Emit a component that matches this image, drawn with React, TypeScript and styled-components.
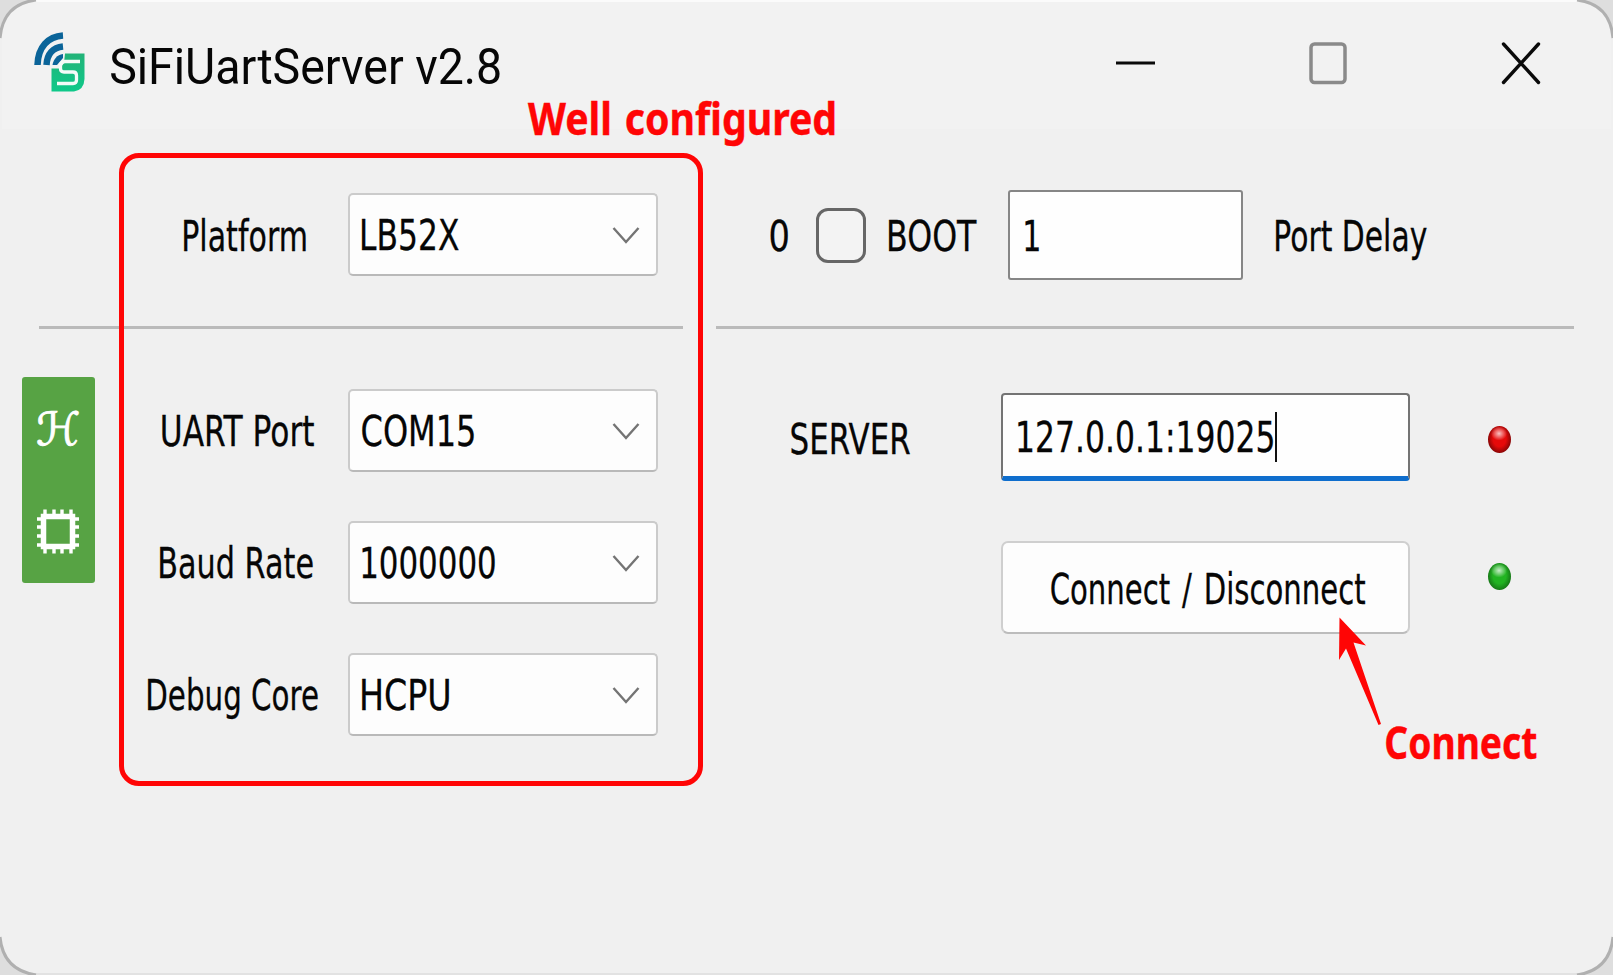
import React, { useMemo } from "react";
import styled, { createGlobalStyle } from "styled-components";

const UI_FONT = '"DejaVu Sans", sans-serif';
const TITLE_FONT = 'Roboto, sans-serif';
const NOTE_FONT = '"Noto Sans", sans-serif';

const GlobalStyle = createGlobalStyle`
  * { box-sizing: border-box; }
  body { margin: 0; background: #f0f0f0; overflow: hidden; }
`;

/* Text squeezed horizontally so that its visible ink fills a given width. */
const FitBox = styled.span<{ $w: number; $size: number; $down: number }>`
  display: block;
  flex: none;
  width: ${(p) => p.$w}px;
  height: ${(p) => p.$size}px;
  margin-top: ${(p) => p.$down * 2}px;
`;
const FitInk = styled.span<{ $size: number; $family: string; $weight: number; $stroke: number; $gap: number }>`
  display: block;
  width: max-content;
  white-space: pre;
  font: ${(p) => p.$weight} ${(p) => p.$size}px/1 ${(p) => p.$family};
  word-spacing: ${(p) => p.$gap}px;
  -webkit-text-stroke: ${(p) => p.$stroke}px currentColor;
  transform-origin: 0 0;
`;
type FitProps = {
  children: string;
  width: number;
  size?: number;
  family?: string;
  weight?: number;
  stroke?: number;
  down?: number;
  gap?: number;
};
function FitText({
  children,
  width,
  size = 43,
  family = UI_FONT,
  weight = 400,
  stroke = 0.3,
  down = 1.3,
  gap = 0,
}: FitProps) {
  const transform = useMemo(() => {
    const ctx = document.createElement("canvas").getContext("2d")!;
    ctx.font = `${weight} ${size}px ${family}`;
    const m = ctx.measureText(children);
    const spaces = children.split(" ").length - 1;
    const ink = m.actualBoundingBoxLeft + m.actualBoundingBoxRight + spaces * gap;
    return `scaleX(${width / ink}) translateX(${m.actualBoundingBoxLeft}px)`;
  }, [children, width, size, family, weight, gap]);
  return (
    <FitBox $w={width} $size={size} $down={down}>
      <FitInk $size={size} $family={family} $weight={weight} $stroke={stroke} $gap={gap} style={{ transform }}>
        {children}
      </FitInk>
    </FitBox>
  );
}

const Window = styled.main`
  position: relative;
  width: 1613px;
  height: 975px;
  color: #060606;
  border: 2px solid #f0f0f0;
  border-top-color: #fbfbfb;
  border-bottom-color: #e2e2e2;
  background: linear-gradient(#f2f2f2 127px, #f0f0f0 127px);
`;
const Corners = styled.svg`
  position: absolute;
  left: -2px;
  top: -2px;
`;
const TitleBar = styled.header`
  display: flex;
  align-items: center;
  height: 124px;
  margin: -2px -2px 18px;
  padding: 0 72px 0 34px;
`;
const Title = styled.h1`
  margin: 10px auto 0 26px;
  font-weight: 400;
`;
const Controls = styled.div`
  display: flex;
  align-items: center;
  gap: 154px;
  height: 44px;
  margin-top: 2px;
  svg { display: block; }
`;
const TopRow = styled.section`
  display: flex;
  align-items: center;
  height: 185px;
  margin: 0 -2px;
`;
const LabelCell = styled.div<{ $inset?: number }>`
  display: flex;
  justify-content: center;
  flex: none;
  width: 231px;
  padding-left: ${(p) => p.$inset ?? 0}px;
`;
const PlatformCell = styled.div`
  display: flex;
  align-items: center;
  width: 770px;
  padding-left: 116.5px;
`;
const Combo = styled.div`
  display: flex;
  align-items: center;
  justify-content: space-between;
  width: 310px;
  height: 83px;
  padding: 0 16px 0 12.5px;
  border: 2px solid #cbcbcb;
  border-bottom-color: #b9b9b9;
  border-radius: 5px;
  background: #fdfdfd;
`;
const CheckBox = styled.span`
  width: 50px;
  height: 55px;
  margin: 1px 23px 0 28px;
  border: 3px solid #666;
  border-radius: 12px;
  background: #f3f3f3;
`;
const DelayInput = styled.div`
  display: flex;
  align-items: center;
  width: 235px;
  height: 90px;
  margin: 0 33px 0 31px;
  padding-left: 15px;
  border: 2px solid #868686;
  border-radius: 3px;
  background: #fefefe;
`;
const Dividers = styled.div`
  display: flex;
  gap: 33px;
  margin: -1px 37px 0;
`;
const Line = styled.hr<{ $w: number }>`
  flex: none;
  width: ${(p) => p.$w}px;
  height: 3px;
  margin: 0;
  border: 0;
  background: #bababa;
`;
const Body = styled.section`
  display: flex;
  align-items: flex-start;
  margin: 1px -2px 0;
`;
const SideBar = styled.nav`
  display: flex;
  flex-direction: column;
  align-items: center;
  justify-content: space-between;
  width: 73px;
  height: 206px;
  margin: 47px 22px 0 21.500px;
  padding: 29px 0;
  border-radius: 3px;
  background: #57a344;
  color: #fff;
`;
const Form = styled.div`
  display: flex;
  flex-direction: column;
  gap: 49px;
  margin-top: 59px;
`;
const FormRow = styled.div`
  display: flex;
  align-items: center;
`;
const ServerPanel = styled.div`
  display: flex;
  flex-direction: column;
  margin: 63px 0 0 133.500px;
`;
const ServerRow = styled.div<{ $top?: number }>`
  display: flex;
  align-items: center;
  margin-top: ${(p) => p.$top ?? 0}px;
`;
const ServerLabel = styled.div`
  width: 210px;
`;
const ServerInput = styled.div`
  display: flex;
  align-items: center;
  width: 409px;
  height: 88px;
  padding: 2px 0 0 15px;
  border: 2px solid #747474;
  border-bottom: 5px solid #0f6ecd;
  border-radius: 4px;
  background: #fefefe;
`;
const Caret = styled.i`
  width: 2px;
  height: 50px;
  margin-left: 2px;
  background: #111;
`;
const ConnectButton = styled.button`
  display: flex;
  align-items: center;
  justify-content: center;
  width: 409px;
  height: 93px;
  padding: 1px 0 0 4px;
  color: inherit;
  border: 2px solid #cfcfcf;
  border-bottom-color: #bcbcbc;
  border-radius: 7px;
  background: #fdfdfd;
`;
const Lamp = styled.span<{ $on: string; $edge: string; $shift: number }>`
  width: 23px;
  height: 27px;
  margin-left: 78px;
  margin-top: ${(p) => p.$shift}px;
  border-radius: 50%;
  background:
    radial-gradient(ellipse 8px 7px at 48% 28%, rgba(255,255,255,.75), rgba(255,255,255,0)),
    radial-gradient(ellipse at 50% 45%, ${(p) => p.$on} 40%, ${(p) => p.$edge} 76%);
`;
const ConfigFrame = styled.div`
  position: absolute;
  left: 117px;
  top: 151px;
  width: 584px;
  height: 633px;
  border: 5px solid #ff0505;
  border-radius: 20px;
`;
const Note = styled.div<{ $x: number; $y: number }>`
  position: absolute;
  left: ${(p) => p.$x - 2}px;
  top: ${(p) => p.$y - 2}px;
  color: #ff0505;
`;
const Arrow = styled.svg`
  position: absolute;
  left: 1335px;
  top: 614px;
`;

const Chevron = () => (
  <svg width="28" height="20" viewBox="0 0 28 20" fill="none" stroke="#747474" strokeWidth="2.4">
    <path d="M1.5 3 L14 17 L26.500 3" />
  </svg>
);

const Logo = () => (
  <svg width="51" height="60" viewBox="0 0 51 60" fill="none">
    <defs>
      <linearGradient id="leaf" x1="0" y1="0" x2="0" y2="1">
        <stop offset="0" stopColor="#22b378" />
        <stop offset="1" stopColor="#0fc98a" />
      </linearGradient>
    </defs>
    <g stroke="#0b6499" strokeWidth="6.500">
      <path d="M29 3.500 C14 4.500 4 15 3.500 33" />
      <path d="M29 14.500 C19 15.500 13 22 12.500 33" />
    </g>
    <path d="M29 22 V26 L23 33 H18.500 C19.500 27 23 23 29 22Z" fill="#0b6499" />
    <path d="M31 21.500 H50.500 V47 Q50 58 40 59.500 H17.500 V36.500 H26 L30 31Z" fill="url(#leaf)" />
    <path
      d="M46 29.500 H31 Q26.500 30 26.500 33.500 V36.500 Q26.500 40 30 40 H39 Q42.500 40 42.500 43.500 V48 Q42.500 51.500 39 51.500 H23"
      stroke="#f4fbf8"
      strokeWidth="3.300"
    />
  </svg>
);

const Chip = () => (
  <svg width="42" height="45" viewBox="0 0 42 45" fill="none" stroke="#fff">
    <rect x="6.500" y="7.500" width="29" height="30" strokeWidth="5.500" />
    <path
      d="M8 0.500V6 M17 0.500V6 M25 0.500V6 M34 0.500V6 M8 39V44.500 M17 39V44.500 M25 39V44.500 M34 39V44.500 M0 10H5 M0 18H5 M0 27H5 M0 36H5 M37 10H42 M37 18H42 M37 27H42 M37 36H42"
      strokeWidth="3.400"
    />
  </svg>
);

const rows = [
  { label: "UART Port", labelW: 152, inset: 11, value: "COM15", valueW: 112 },
  { label: "Baud Rate", labelW: 153, inset: 9, value: "1000000", valueW: 133 },
  { label: "Debug Core", labelW: 170, inset: 1, value: "HCPU", valueW: 87 },
];

export default function App() {
  return (
    <>
      <GlobalStyle />
      <Window>
        <TitleBar>
          <Logo />
          <Title>
            <FitText width={389} size={50.5} family={TITLE_FONT} stroke={0} down={0}>SiFiUartServer v2.8</FitText>
          </Title>
          <Controls>
            <svg width="39" height="44" fill="none" stroke="#0a0a0a" strokeWidth="3.200">
              <path d="M0 22H39" />
            </svg>
            <svg width="38" height="44" fill="none" stroke="#8a8a8a" strokeWidth="3.500">
              <rect x="2" y="3" width="34" height="38.500" rx="3.500" />
            </svg>
            <svg width="40" height="44" fill="none" stroke="#0a0a0a" strokeWidth="3.400" strokeLinecap="round">
              <path d="M2.500 3 L37.500 41.500 M37.500 3 L2.500 41.500" />
            </svg>
          </Controls>
        </TitleBar>

        <TopRow>
          <PlatformCell>
            <LabelCell $inset={26}>
              <FitText width={122} down={2}>Platform</FitText>
            </LabelCell>
            <Combo>
              <FitText width={97}>LB52X</FitText>
              <Chevron />
            </Combo>
          </PlatformCell>
          <FitText width={18} down={2}>0</FitText>
          <CheckBox />
          <FitText width={88} down={2}>BOOT</FitText>
          <DelayInput>
            <FitText width={14} down={2}>1</FitText>
          </DelayInput>
          <FitText width={151} down={2}>Port Delay</FitText>
        </TopRow>

        <Dividers>
          <Line $w={644} />
          <Line $w={858} />
        </Dividers>

        <Body>
          <SideBar>
            <FitText width={42} size={46} family={UI_FONT} stroke={0.9} down={0}>ℋ</FitText>
            <Chip />
          </SideBar>
          <Form>
            {rows.map((r) => (
              <FormRow key={r.label}>
                <LabelCell $inset={r.inset}>
                  <FitText width={r.labelW}>{r.label}</FitText>
                </LabelCell>
                <Combo>
                  <FitText width={r.valueW}>{r.value}</FitText>
                  <Chevron />
                </Combo>
              </FormRow>
            ))}
          </Form>
          <ServerPanel>
            <ServerRow>
              <ServerLabel>
                <FitText width={119} down={2}>SERVER</FitText>
              </ServerLabel>
              <ServerInput>
                <FitText width={255}>127.0.0.1:19025</FitText>
                <Caret />
              </ServerInput>
              <Lamp $on="#e60a0a" $edge="#7c0505" $shift={4} />
            </ServerRow>
            <ServerRow $top={60}>
              <ServerLabel />
              <ConnectButton>
                <FitText width={314} gap={4}>Connect / Disconnect</FitText>
              </ConnectButton>
              <Lamp $on="#22b422" $edge="#157015" $shift={-22} />
            </ServerRow>
          </ServerPanel>
        </Body>

        <ConfigFrame />
        <Note $x={528} $y={95}>
          <FitText width={307} size={45} family={NOTE_FONT} weight={700} stroke={0.4} down={0} gap={3}>Well configured</FitText>
        </Note>
        <Note $x={1386} $y={719}>
          <FitText width={151} size={45} family={NOTE_FONT} weight={700} stroke={0.4} down={0}>Connect</FitText>
        </Note>
        <Arrow width="50" height="116" viewBox="1337 616 50 116">
          <path d="M1339.500 617.500 L1366 645.500 L1353.500 642.500 L1381 724 L1378.500 725 L1346 648.500 L1339 660Z" fill="#ff0505" />
        </Arrow>
        <Corners width="1613" height="975" fill="none">
          <path
            d="M0 0V37Q2 4 35 0Z M1613 0V37Q1611 4 1578 0Z M0 975V937Q2 970 35 975Z M1613 975V937Q1611 970 1578 975Z"
            fill="#dedede"
          />
          <path
            d="M0 38Q3 4 36 0 M1613 38Q1610 4 1577 0 M0 937Q3 970 36 975 M1613 937Q1610 970 1577 975"
            stroke="#b0b0b0"
            strokeWidth="3"
          />
        </Corners>
      </Window>
    </>
  );
}
